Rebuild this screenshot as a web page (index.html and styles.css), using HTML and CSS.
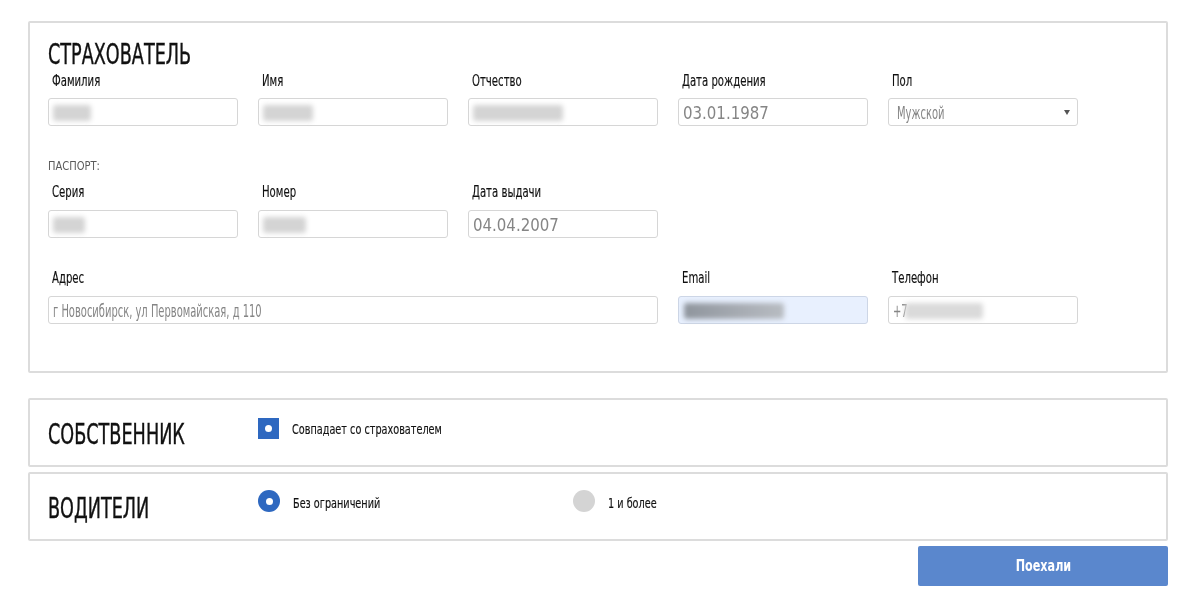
FILE: index.html
```html
<!DOCTYPE html>
<html lang="ru">
<head>
<meta charset="utf-8">
<title>ОСАГО</title>
<link rel="stylesheet" href="styles.css">
</head>
<body>
<div class="page">
  <section class="panel panel-main">
    <h2 class="title"><span class="nx">СТРАХОВАТЕЛЬ</span></h2>
    <div class="grid grid-person">
      <div class="field"><div class="label"><span class="nx">Фамилия</span></div><div class="input"><span class="blur" style="width:38px"></span></div></div>
      <div class="field"><div class="label"><span class="nx">Имя</span></div><div class="input"><span class="blur" style="width:50px"></span></div></div>
      <div class="field"><div class="label"><span class="nx">Отчество</span></div><div class="input"><span class="blur" style="width:90px"></span></div></div>
      <div class="field"><div class="label"><span class="nx">Дата рождения</span></div><div class="input"><span class="val num">03.01.1987</span></div></div>
      <div class="field"><div class="label"><span class="nx">Пол</span></div><div class="input select"><span class="val txt">Мужской</span><span class="arrow"></span></div></div>
    </div>
    <div class="subhead"><span class="nx">ПАСПОРТ:</span></div>
    <div class="grid grid-passport">
      <div class="field"><div class="label"><span class="nx">Серия</span></div><div class="input"><span class="blur" style="width:32px"></span></div></div>
      <div class="field"><div class="label"><span class="nx">Номер</span></div><div class="input"><span class="blur" style="width:43px"></span></div></div>
      <div class="field"><div class="label"><span class="nx">Дата выдачи</span></div><div class="input"><span class="val num">04.04.2007</span></div></div>
    </div>
    <div class="grid grid-contact">
      <div class="field field-wide"><div class="label"><span class="nx">Адрес</span></div><div class="input"><span class="val txt">г Новосибирск, ул Первомайская, д 110</span></div></div>
      <div class="field"><div class="label"><span class="nx">Email</span></div><div class="input autofill"><span class="blur dark" style="width:100px"></span></div></div>
      <div class="field"><div class="label"><span class="nx">Телефон</span></div><div class="input"><span class="val txt phone">+7</span><span class="blur light" style="width:78px"></span></div></div>
    </div>
  </section>

  <section class="panel panel-row panel-owner">
    <h2 class="title"><span class="nx">СОБСТВЕННИК</span></h2>
    <div class="option">
      <span class="checkbox"><span class="dot"></span></span>
      <span class="opt-text"><span class="nx">Совпадает со страхователем</span></span>
    </div>
  </section>

  <section class="panel panel-row panel-drivers">
    <h2 class="title"><span class="nx">ВОДИТЕЛИ</span></h2>
    <div class="option option-radio">
      <span class="radio on"><span class="dot"></span></span>
      <span class="opt-text"><span class="nx">Без ограничений</span></span>
    </div>
    <div class="option option-radio">
      <span class="radio"></span>
      <span class="opt-text"><span class="nx">1 и более</span></span>
    </div>
  </section>

  <div class="actions">
    <button class="btn"><span class="nx">Поехали</span></button>
  </div>
</div>
</body>
</html>
```

FILE: styles.css
```css
* { box-sizing: border-box; }
html, body { margin: 0; padding: 0; background: #fff; }
body {
  font-family: "DejaVu Sans Condensed", "Liberation Sans", sans-serif;
  color: #111;
}
.nx {
  display: inline-block;
  white-space: nowrap;
  transform-origin: left center;
}
.page {
  width: 1198px;
  padding: 21px 30px 0 28px;
}
.panel {
  border: 2px solid #dcdcdc;
  border-radius: 2px;
  background: #fff;
}
.panel-main {
  height: 352px;
  padding: 18px 18px 0 18px;
}
.title {
  margin: 0;
  font-size: 28px;
  line-height: 28px;
  font-weight: normal;
  color: #111;
  -webkit-text-stroke: 0.4px #111;
}
.title .nx { transform: scaleX(0.7); }
.grid {
  display: grid;
  grid-template-columns: repeat(5, 190px);
  column-gap: 20px;
}
.grid-person { margin-top: 3px; }
.grid-person .label { margin-bottom: 8px; }
.field-wide { grid-column: span 3; }
.label {
  font-size: 15px;
  line-height: 18px;
  padding-left: 4px;
  margin-bottom: 9px;
  color: #111;
  -webkit-text-stroke: 0.15px #111;
}
.label .nx { transform: scaleX(0.75); }
.input {
  height: 28px;
  border: 1px solid #d6d6d6;
  border-radius: 3px;
  background: #fff;
  display: flex;
  align-items: center;
  padding: 2px 4px 0 4px;
  font-size: 17px;
  color: #858585;
  position: relative;
}
.input .val {
  display: inline-block;
  white-space: nowrap;
  line-height: 20px;
  transform-origin: left center;
}
.input .val.num { transform: scaleX(0.98); }
.input .val.txt { transform: scaleX(0.65); }
.input .val.phone { width: 12px; }
.input.select { padding-left: 8px; margin-top: 1px; }
.input.autofill { background: #e8f0fe; border-color: #cdd6e6; }
.blur {
  display: inline-block;
  height: 16px;
  background: #d4d4d4;
  filter: blur(2.5px);
  border-radius: 3px;
}
.blur.dark { background: linear-gradient(90deg, #8f959d, #a8adb4 60%, #b8bcc2); margin-left: 1px; }
.blur.light { background: #dadada; margin-left: 0; }
.select .arrow {
  position: absolute;
  right: 7px;
  top: 11px;
  width: 0; height: 0;
  border-left: 3px solid transparent;
  border-right: 3px solid transparent;
  border-top: 5px solid #555;
}
.subhead {
  margin-top: 32px;
  font-size: 13px;
  line-height: 16px;
  color: #5a5a5a;
}
.subhead .nx { transform: scaleX(0.85); }
.grid-passport { margin-top: 9px; }
.grid-contact { margin-top: 31px; }

.panel-row {
  height: 69px;
  display: flex;
  align-items: flex-start;
  padding: 0 18px;
}
.panel-owner { margin-top: 25px; }
.panel-drivers { margin-top: 5px; }
.panel-row .title { width: 210px; flex: none; }
.panel-owner .title { margin-top: 21px; }
.panel-drivers .title { margin-top: 21px; }

.option {
  display: flex;
  align-items: center;
  font-size: 14px;
  color: #111;
  -webkit-text-stroke: 0.15px #111;
}
.option .nx { transform: scaleX(0.77); }
.panel-owner .option { margin-top: 18px; }
.option-radio { margin-top: 16px; align-items: flex-start; width: 315px; }
.opt-text { margin-left: 13px; line-height: 18px; }
.option-radio .opt-text { margin-top: 4px; margin-left: 13px; }

.checkbox {
  width: 21px; height: 21px;
  background: #2e68c0;
  display: flex; align-items: center; justify-content: center;
}
.checkbox .dot, .radio .dot {
  width: 7px; height: 7px; border-radius: 50%; background: #fff;
}
.radio {
  width: 22px; height: 22px; border-radius: 50%;
  background: #d4d4d4;
  display: flex; align-items: center; justify-content: center;
  -webkit-text-stroke: 0;
}
.radio.on { background: #2e68c0; }

.actions {
  display: flex;
  justify-content: flex-end;
  margin-top: 5px;
}
.btn {
  width: 250px;
  height: 40px;
  border: none;
  border-radius: 2px;
  background: #5a87cd;
  color: #fff;
  font-family: inherit;
  font-weight: bold;
  font-size: 15px;
  display: flex;
  align-items: center;
  justify-content: center;
}
.btn .nx { transform: scaleX(0.83); transform-origin: center; }
```
